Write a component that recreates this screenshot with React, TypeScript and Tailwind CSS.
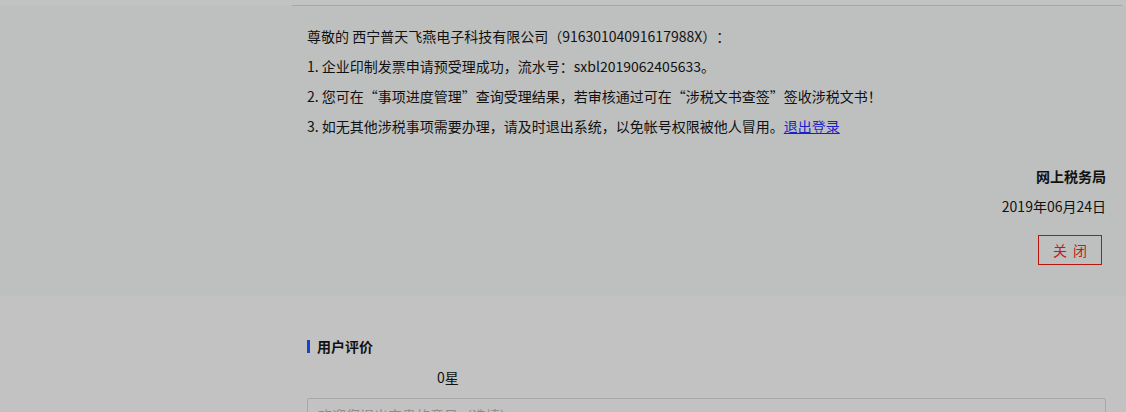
import React from "react";

const font = "font-['Noto_Sans_CJK_SC','Noto_Sans',sans-serif] [text-spacing-trim:space-all]";

const ResultPanel = () => {
  return (
    <div className="mt-[5px] bg-[#bec0bf] pb-[31px]">
      <div className="ml-[292px] w-[830px] border-t border-[#a6a8a7] pt-[15px] pl-[15px] pr-[16px] text-[14px] leading-[30px] text-[#111]">
        <p>尊敬的 西宁普天飞燕电子科技有限公司（91630104091617988X）：</p>
        <p>1. 企业印制发票申请预受理成功，流水号：sxbl2019062405633。</p>
        <p>2. 您可在“事项进度管理”查询受理结果，若审核通过可在“涉税文书查签”签收涉税文书！</p>
        <p>
          3. 如无其他涉税事项需要办理，请及时退出系统，以免帐号权限被他人冒用。
          <a href="#" className="text-[#1d1dcc] underline">
            退出登录
          </a>
        </p>

        <div className="mt-[20px] flex flex-col items-end">
          <p className="font-bold">网上税务局</p>
          <p>2019年06月24日</p>
          <button className="mt-[14px] mr-[4px] h-[30px] w-[64px] border border-[#b8150f] text-[14px] leading-[28px] tracking-[6px] pl-[6px] text-[#c01d17]">
            关闭
          </button>
        </div>
      </div>
    </div>
  );
};

const RatingSection = () => {
  return (
    <div className="ml-[307px] w-[799px] pt-[40px]">
      <div className="flex items-center h-[20px]">
        <span className="w-[3px] h-[13px] bg-[#1446c8]" />
        <h3 className="ml-[7px] text-[14px] font-bold text-[#111]">用户评价</h3>
      </div>
      <div className="mt-[10px] pl-[130px] text-[14px] leading-[22px] text-[#111]">0星</div>
      <textarea
        className="mt-[10px] block w-full h-[80px] border border-[#a8a8a8] rounded-[2px] bg-transparent px-[10px] py-[6px] text-[14px] outline-none placeholder:text-[#8c8c8c] resize-none"
        placeholder="欢迎您提出宝贵的意见（选填）"
      />
    </div>
  );
};

export default function App() {
  return (
    <div className={`w-[1126px] h-[412px] overflow-hidden bg-[#c2c2c2] ${font}`}>
      <ResultPanel />
      <RatingSection />
    </div>
  );
}
